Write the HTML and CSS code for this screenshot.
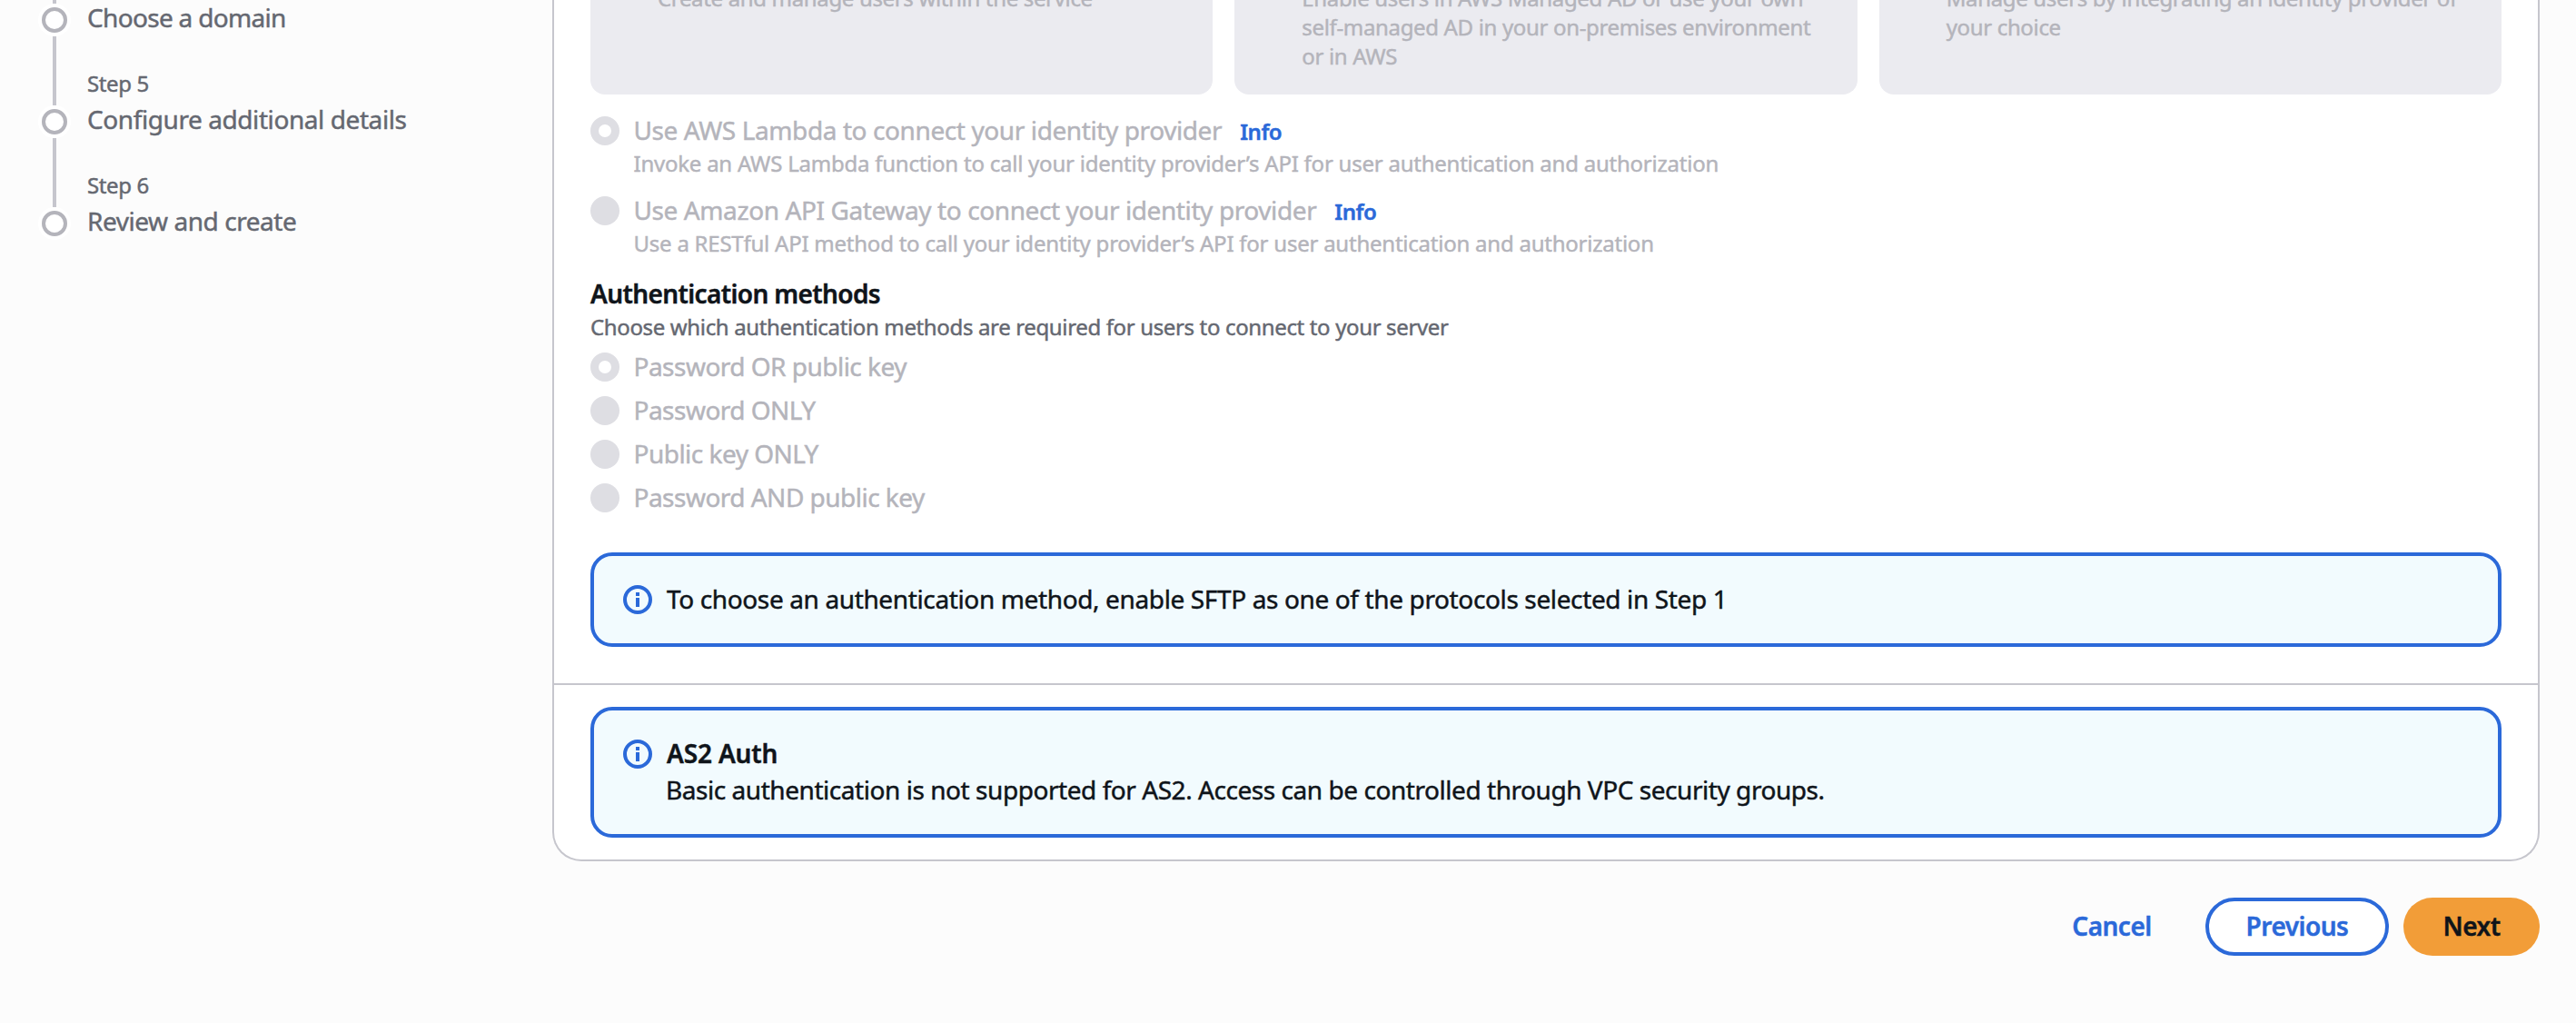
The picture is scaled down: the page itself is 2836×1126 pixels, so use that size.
FILE: index.html
```html
<!DOCTYPE html>
<html lang="en">
<head>
<meta charset="utf-8">
<title>Create server</title>
<link rel="stylesheet" href="styles.css">
</head>
<body>
<div class="layout">
  <nav class="steps">
    <div class="step step-first">
      <div class="rail"><span class="line"></span><span class="dot"></span></div>
      <div class="step-text"><div class="step-name n1">Choose a domain</div></div>
    </div>
    <div class="step">
      <div class="rail"><span class="line"></span><span class="dot"></span></div>
      <div class="step-text"><div class="step-no">Step 5</div><div class="step-name n2">Configure additional details</div></div>
    </div>
    <div class="step">
      <div class="rail"><span class="line"></span><span class="dot"></span></div>
      <div class="step-text"><div class="step-no">Step 6</div><div class="step-name n3">Review and create</div></div>
    </div>
  </nav>
  <main class="main">
    <section class="panel">
      <div class="panel-body">
        <div class="tiles">
          <div class="tile">Create and manage users within the service</div>
          <div class="tile">Enable users in AWS Managed AD or use your own<br>self-managed AD in your on-premises environment<br>or in AWS</div>
          <div class="tile">Manage users by integrating an identity provider of<br>your choice</div>
        </div>
        <div class="options">
          <div class="option">
            <span class="radio checked"></span>
            <div>
              <div class="label"><span>Use AWS Lambda to connect your identity provider</span><a class="info">Info</a></div>
              <div class="desc">Invoke an AWS Lambda function to call your identity provider’s API for user authentication and authorization</div>
            </div>
          </div>
          <div class="option">
            <span class="radio"></span>
            <div>
              <div class="label"><span>Use Amazon API Gateway to connect your identity provider</span><a class="info">Info</a></div>
              <div class="desc">Use a RESTful API method to call your identity provider’s API for user authentication and authorization</div>
            </div>
          </div>
        </div>
        <h3 class="heading">Authentication methods</h3>
        <p class="hint">Choose which authentication methods are required for users to connect to your server</p>
        <div class="methods">
          <div class="option"><span class="radio checked"></span><div class="label">Password OR public key</div></div>
          <div class="option"><span class="radio"></span><div class="label">Password ONLY</div></div>
          <div class="option"><span class="radio"></span><div class="label">Public key ONLY</div></div>
          <div class="option"><span class="radio"></span><div class="label">Password AND public key</div></div>
        </div>
        <div class="alert">
          <svg class="icon" viewBox="0 0 32 32"><circle cx="16" cy="16" r="14"/><path d="M16 14v10M16 8v4"/></svg>
          <div class="alert-text"><div class="msg">To choose an authentication method, enable SFTP as one of the protocols selected in Step 1</div></div>
        </div>
      </div>
      <div class="panel-foot">
        <div class="alert">
          <svg class="icon" viewBox="0 0 32 32"><circle cx="16" cy="16" r="14"/><path d="M16 14v10M16 8v4"/></svg>
          <div class="alert-text">
            <div class="title">AS2 Auth</div>
            <div class="msg basic">Basic authentication is not supported for AS2. Access can be controlled through VPC security groups.</div>
          </div>
        </div>
      </div>
    </section>
    <div class="actions">
      <button class="btn link">Cancel</button>
      <button class="btn outline">Previous</button>
      <button class="btn primary">Next</button>
    </div>
  </main>
</div>
</body>
</html>
```
FILE: styles.css
```css
* { box-sizing: border-box; }

body {
  margin: 0;
  height: 1126px;
  overflow: hidden;
  background: #fcfcfc;
  color: #0f141a;
  font-family: "Noto Sans", "Open Sans", sans-serif;
  font-size: 28px;
  line-height: 38px;
  white-space: nowrap;
  -webkit-text-stroke: 0.45px currentColor;
}

.layout { display: flex; height: 1126px; }

/* Wizard steps */
.steps { width: 608px; flex: none; padding-left: 42px; color: #656871; }
.step { display: flex; height: 112px; }
.step-first { height: 40px; }
.rail {
  width: 36px;
  display: flex;
  flex-direction: column;
  align-items: center;
}
.line { width: 4px; flex: 1; background: #c6c6cd; }
.dot {
  width: 28px;
  height: 28px;
  margin: 4px 0;
  border: 4px solid #b4b4bb;
  border-radius: 50%;
  background: #fff;
  box-shadow: 0 0 0 4px #fff;
}
.step-text { padding: 36px 0 0 18px; }
.step-first .step-text { padding-top: 0; }
.step-no { font-size: 24px; line-height: 32px; margin-bottom: 4px; letter-spacing: -0.4px; }
.n1 { letter-spacing: -0.68px; }
.n2 { letter-spacing: -0.42px; }
.n3 { letter-spacing: -0.45px; }

/* Form panel */
.main { width: 2188px; flex: none; }
.panel {
  height: 948px;
  border: 2px solid #c6c6cd;
  border-top: 0;
  border-radius: 0 0 32px 32px;
  background: #fff;
}
.panel-body { height: 754px; padding: 0 40px; border-bottom: 2px solid #c6c6cd; overflow: hidden; }
.tiles { display: grid; grid-template-columns: repeat(3, 1fr); gap: 24px; margin-top: -18px; }
.tile {
  height: 122px;
  padding-left: 74px;
  border-radius: 0 0 16px 16px;
  background: #ebebf0;
  color: #b4b4bb;
  font-size: 24px;
  line-height: 32px;
  letter-spacing: -0.34px;
}
.options { display: grid; gap: 16px; margin-top: 20px; }
.option { display: flex; gap: 15.5px; color: #b4b4bb; }
.radio { width: 32px; height: 32px; margin-top: 4px; flex: none; border-radius: 50%; background: #dedee3; }
.radio.checked { border: 9.5px solid #dedee3; background: #fff; }
.label { display: flex; align-items: baseline; height: 40px; letter-spacing: -0.4px; }
.methods .label { letter-spacing: -0.52px; }
.info { margin-left: 20px; color: #2b69d9; font-size: 24px; font-weight: 600; letter-spacing: -0.5px; }
.desc { font-size: 24px; line-height: 32px; letter-spacing: -0.235px; }
.heading { margin: 20px 0 2px; font-size: 28px; font-weight: 600; letter-spacing: -0.62px; }
.hint { margin: 0; color: #656871; font-size: 24px; line-height: 32px; letter-spacing: -0.355px; }
.methods { display: grid; gap: 8px; margin: 8px 0 40px; }

/* Informational alerts */
.alert {
  display: flex;
  padding: 28px 32px 28px;
  border: 4px solid #2b69d9;
  border-radius: 24px;
  background: #f2fbfe;
}
.icon { width: 32px; height: 32px; margin: 4px 16px 0 0; flex: none; fill: none; stroke: #2b69d9; stroke-width: 4; }
.msg { margin-bottom: 2px; letter-spacing: -0.37px; }
.basic { margin-left: -1px; letter-spacing: -0.45px; }
.title { margin-bottom: 2px; font-weight: 600; letter-spacing: -0.15px; }
.panel-foot { padding: 24px 40px; }

/* Footer buttons */
.actions { display: flex; justify-content: flex-end; margin-top: 40px; }
.btn {
  height: 64px;
  padding: 0 0 2px;
  border: 0;
  border-radius: 32px;
  background: none;
  font: 600 28px/38px "Noto Sans", "Open Sans", sans-serif;
  letter-spacing: -0.5px;
}
.link { width: 166px; margin-right: 20px; color: #2b69d9; }
.outline { width: 202px; margin-right: 16px; border: 4px solid #2b69d9; background: #fff; color: #2b69d9; }
.primary { width: 150px; background: #f29d38; color: #0f141a; }
```
